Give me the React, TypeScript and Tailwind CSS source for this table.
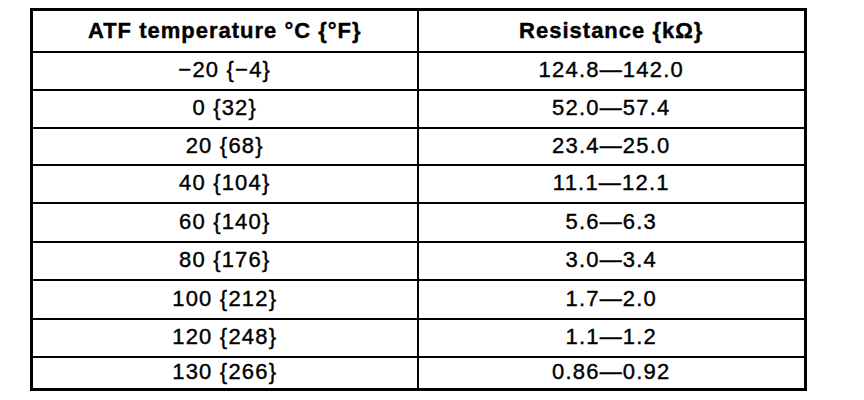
const rows: [string, string][] = [
  ["\u221220 {\u22124}", "124.8\u2014142.0"],
  ["0 {32}", "52.0\u201457.4"],
  ["20 {68}", "23.4\u201425.0"],
  ["40 {104}", "11.1\u201412.1"],
  ["60 {140}", "5.6\u20146.3"],
  ["80 {176}", "3.0\u20143.4"],
  ["100 {212}", "1.7\u20142.0"],
  ["120 {248}", "1.1\u20141.2"],
  ["130 {266}", "0.86\u20140.92"],
];

const heights = ["h-[38px]", "h-[38px]", "h-[37px]", "h-[38px]", "h-[39px]", "h-[38px]", "h-[39px]", "h-[38px]", "h-[33px]"];

export default function App() {
  return (
    <div className="h-[400px] w-[864px] bg-white pl-[30px] pt-[8px] font-['Liberation_Sans',Arial,sans-serif] text-black">
      <table className="w-[777px] table-fixed border-collapse border-[3px] border-black text-[22px] leading-none tracking-[1.2px] [-webkit-text-stroke:0.4px_black]">
        <colgroup>
          <col className="w-[386px]" />
          <col />
        </colgroup>
        <thead>
          <tr className="h-[42px]">
            <th className="border-2 border-black text-center font-bold tracking-[1px]">
              ATF temperature °C {"{"}°F{"}"}
            </th>
            <th className="border-2 border-black text-center font-bold tracking-[1px]">
              Resistance {"{"}kΩ{"}"}
            </th>
          </tr>
        </thead>
        <tbody>
          {rows.map(([temp, res], i) => (
            <tr key={temp} className={heights[i]}>
              <td className="border-2 border-black pb-[1px] text-center">{temp}</td>
              <td className="border-2 border-black pb-[1px] text-center">{res}</td>
            </tr>
          ))}
        </tbody>
      </table>
    </div>
  );
}
